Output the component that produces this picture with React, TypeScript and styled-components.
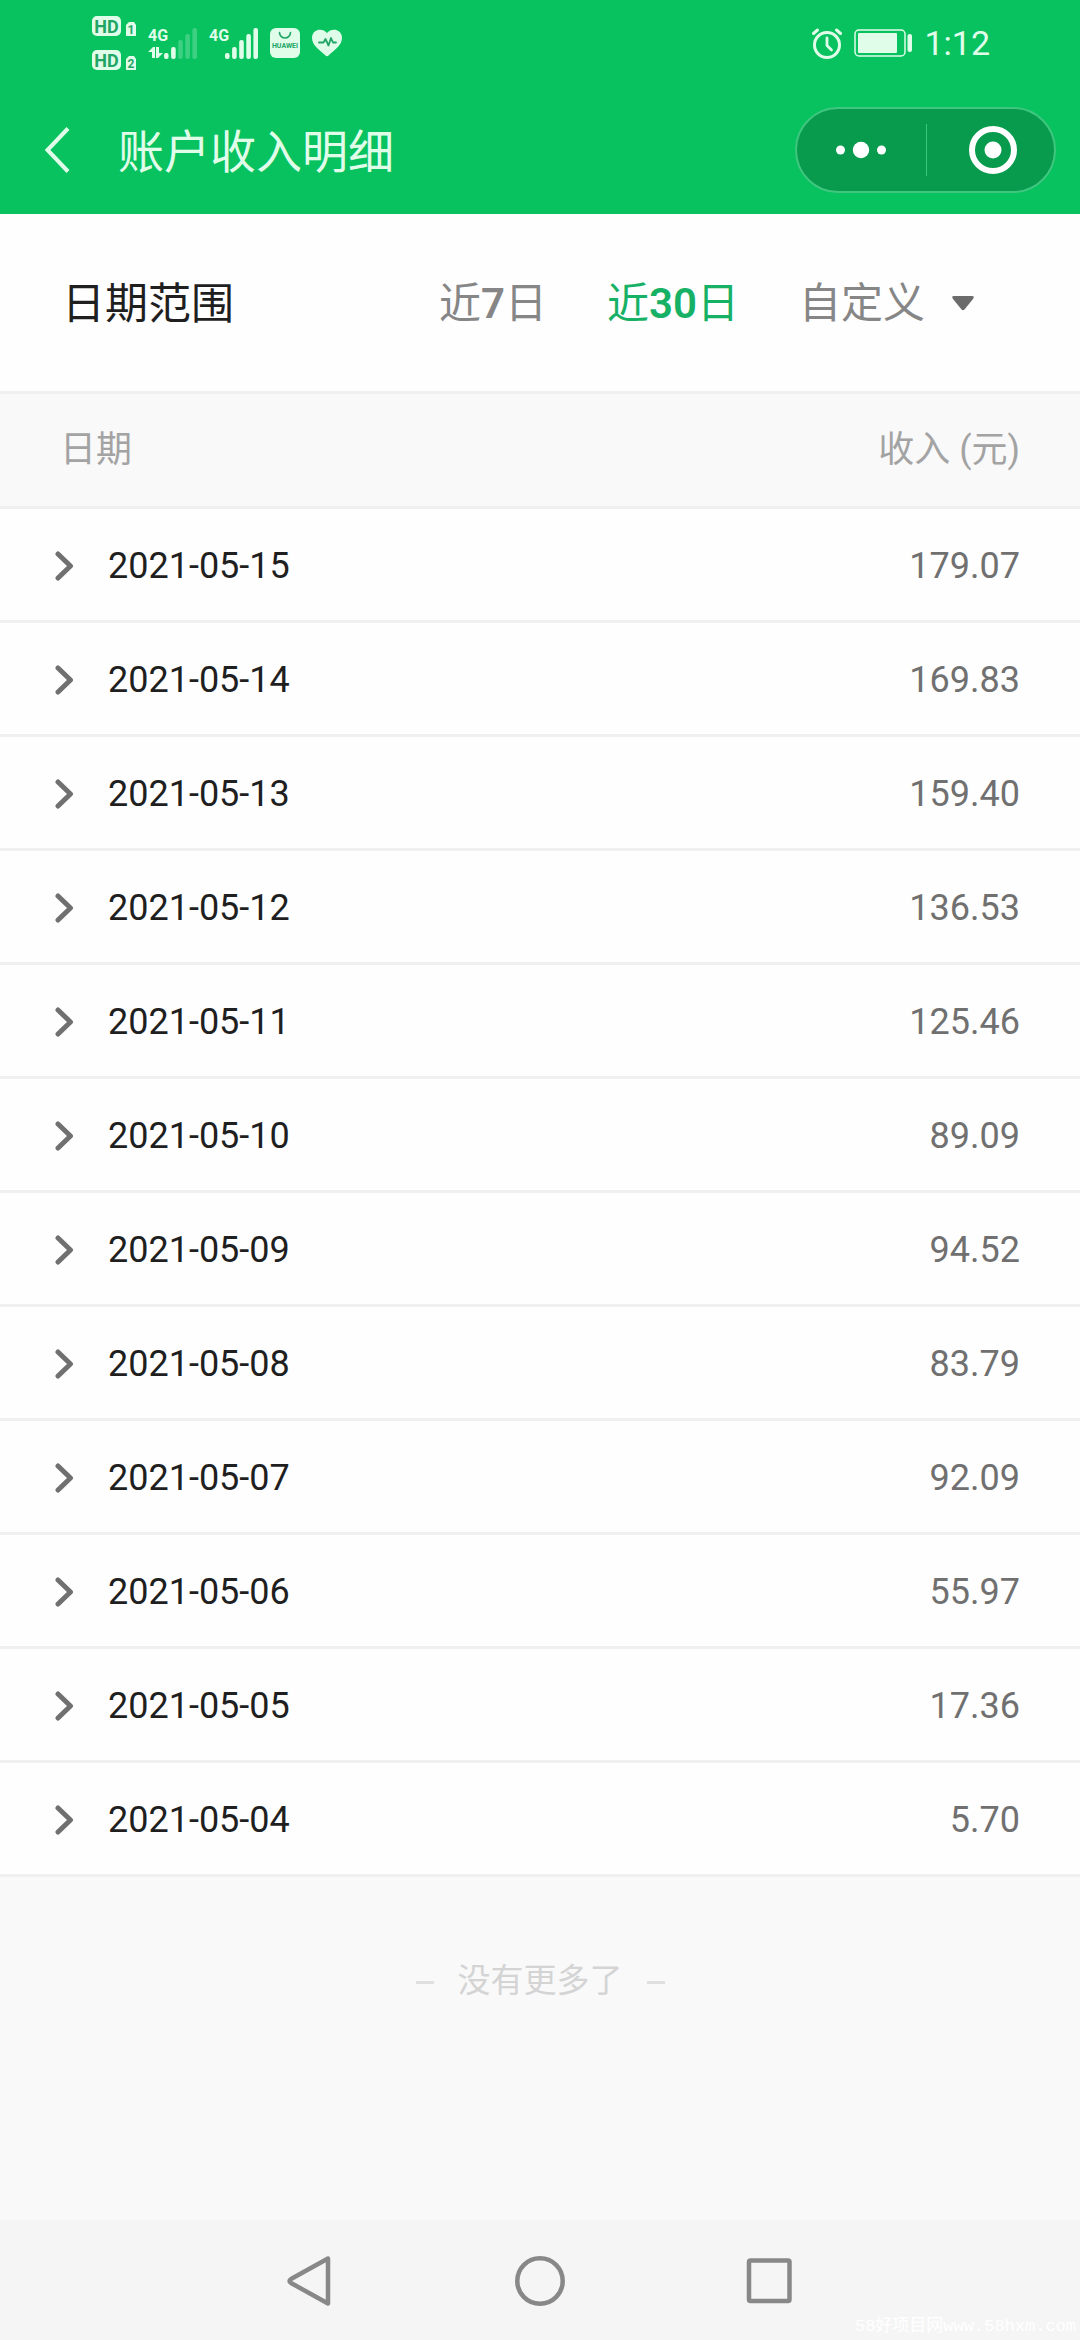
import React, { useState } from "react";
import styled, { createGlobalStyle } from "styled-components";

const color = {
  brand: "#07c25f",
  onBrand: "#e0fdea",
  capsule: "#089b4d",
  capsuleLine: "#3fc67f",
  page: "#f9f9f9",
  surface: "#fefefe",
  line: "#f0f0f0",
  text: "#1f1f1f",
  muted: "#707070",
  soft: "#868686",
  faint: "#a3a3a3",
  ghost: "#d4d4d4",
  active: "#17b165",
  systemBar: "#f5f5f5",
};

const GlobalStyle = createGlobalStyle`
  *, *::before, *::after { box-sizing: border-box; }
  body {
    margin: 0;
    background: ${color.page};
    font-family: Roboto, "Noto Sans CJK SC", sans-serif;
    color: ${color.text};
  }
  button, select { font: inherit; color: inherit; background: none; border: 0; margin: 0; padding: 0; }
  svg { display: block; flex: none; }
`;

const Screen = styled.div`
  display: flex;
  flex-direction: column;
  min-height: 100vh;
`;

const TopArea = styled.header`
  background: ${color.brand};
  color: ${color.onBrand};
`;

const StatusBar = styled.div`
  display: flex;
  align-items: center;
  justify-content: space-between;
  height: 86px;
  padding: 0 90px 0 92px;
`;

const StatusGroup = styled.div`
  display: flex;
  align-items: center;
  gap: 12px;
`;

const Clock = styled.time`
  font-size: 34px;
  line-height: 40px;
`;

const TitleBar = styled.div`
  display: flex;
  align-items: center;
  height: 128px;
  padding: 0 24px 0 42px;
`;

const BackButton = styled.button`
  display: flex;
  width: 76px;
  height: 60px;
  align-items: center;
`;

const Title = styled.h1`
  flex: 1;
  margin: 0;
  padding-top: 3px;
  font-size: 46px;
  font-weight: 400;
  line-height: 60px;
`;

const Capsule = styled.div`
  display: flex;
  width: 261px;
  height: 86px;
  align-items: center;
  border: 2px solid ${color.capsuleLine};
  border-radius: 43px;
  background: ${color.capsule};
  color: #fff;
`;

const CapsuleButton = styled.button`
  display: flex;
  width: 50%;
  height: 52px;
  align-items: center;
  justify-content: center;

  & + & {
    padding-left: 6px;
    border-left: 1px solid ${color.capsuleLine};
  }
`;

const FilterBar = styled.section`
  display: flex;
  align-items: center;
  justify-content: space-between;
  height: 180px;
  padding: 2px 106px 0 62px;
  border-bottom: 3px solid ${color.line};
  background: ${color.surface};
  font-size: 42px;
  line-height: 60px;
`;

const FilterLabel = styled.h2`
  margin: 0;
  font-size: 43px;
  font-weight: 400;
`;

const FilterOptions = styled.div`
  display: flex;
  align-items: center;
  gap: 60px;
`;

const FilterButton = styled.button<{ $active?: boolean }>`
  color: ${(p) => (p.$active ? color.active : color.soft)};

  b {
    font-weight: 600;
  }
`;

const CustomRange = styled.label`
  position: relative;
  display: flex;
  align-items: center;
  color: ${color.soft};

  svg {
    position: absolute;
    right: 0;
    pointer-events: none;
  }
`;

const RangeSelect = styled.select`
  appearance: none;
  padding-right: 48px;
  line-height: 60px;
`;

const IncomeTable = styled.table`
  width: 100%;
  border-collapse: separate;
  border-spacing: 0;
  font-size: 36px;
  line-height: 48px;
`;

const HeadCell = styled.th<{ $end?: boolean }>`
  height: 115px;
  padding: 0 60px;
  border-bottom: 3px solid ${color.line};
  color: ${color.faint};
  font-weight: 400;
  text-align: ${(p) => (p.$end ? "right" : "left")};
`;

const DateCell = styled.td`
  height: 114px;
  padding: 2px 0 0 52px;
  border-bottom: 3px solid ${color.line};
  background: ${color.surface};
`;

const AmountCell = styled(DateCell)`
  padding: 2px 60px 0 0;
  color: ${color.muted};
  text-align: right;
`;

const ExpandButton = styled.button`
  display: flex;
  align-items: center;
  gap: 30px;

  svg {
    color: ${color.muted};
  }
`;

const EndNote = styled.p`
  display: flex;
  flex: 1;
  align-items: flex-start;
  justify-content: center;
  gap: 24px;
  margin: 0;
  padding: 80px 0;
  color: ${color.ghost};
  font-size: 33px;
  line-height: 48px;

  &::before,
  &::after {
    content: "";
    width: 18px;
    height: 3px;
    margin-top: 24px;
    background: #e0e0e0;
  }
`;

const SystemNav = styled.nav`
  position: relative;
  display: flex;
  align-items: center;
  justify-content: center;
  gap: 180px;
  height: 120px;
  padding-top: 2px;
  background: ${color.systemBar};
  color: #888;
`;

const SystemButton = styled.button`
  display: flex;
`;

const Watermark = styled.span`
  position: absolute;
  right: 4px;
  bottom: 2px;
  color: #fff;
  font-family: "Liberation Mono", "Noto Sans CJK SC", monospace;
  font-size: 17px;
  line-height: 22px;
`;

const HdIcon = () => (
  <svg width="44" height="70" viewBox="0 -8 44 70" fontFamily="Roboto, sans-serif" fontWeight="700">
    {["1", "2"].map((n, i) => (
      <g key={n} transform={`translate(0 ${i * 34})`}>
        <rect width="29" height="20" rx="5" fill="currentColor" />
        <text x="14.5" y="16.500" fontSize="18" textAnchor="middle" fill="#21a565">HD</text>
        <path d="M37 6h5l2 3v11H34V9z" fill="currentColor" />
        <text x="39" y="18" fontSize="12" textAnchor="middle" fill="#21a565">{n}</text>
      </g>
    ))}
  </svg>
);

const SignalIcon = ({ level, data }: { level: number; data?: boolean }) => (
  <svg width="49" height="47" viewBox="0 -8 49 47" fill="currentColor">
    <text x="0" y="13" fontSize="16" fontWeight="700" fontFamily="Roboto, sans-serif">4G</text>
    {data && <path d="M0 24l5-5h2v11H4v-6zM8 19h3v6h4l-5 5H8z" />}
    {[6, 12, 19, 25, 31].map((h, i) => (
      <rect key={h} x={16 + i * 7.1} y={31 - h} width="4.6" height={h} rx="2" opacity={i < level ? 1 : 0.25} />
    ))}
  </svg>
);

const StoreIcon = () => (
  <svg width="30" height="30" viewBox="0 0 30 30">
    <rect width="30" height="30" rx="6" fill="currentColor" />
    <path d="M9.500 4.500a5.500 5.500 0 0 0 11 0" fill="none" stroke="#21a565" strokeWidth="1.600" strokeLinecap="round" />
    <text x="15" y="20" fontSize="7" fontWeight="700" fontFamily="Roboto, sans-serif" textAnchor="middle" fill="#21a565">HUAWEI</text>
  </svg>
);

const HealthIcon = () => (
  <svg width="30" height="28" viewBox="0 0 30 28">
    <path d="M15 4C11-1.500 0-.5 0 9c0 8 9 13 13.500 17.500q1.500 1.500 3 0C21 22 30 17 30 9 30-.5 19-1.500 15 4z" fill="currentColor" />
    <path d="M7 13.500h4.500l2-3.500 3 6.500L19 9l2 4.500h3" fill="none" stroke="#21a565" strokeWidth="1.800" strokeLinejoin="round" strokeLinecap="round" />
  </svg>
);

const AlarmIcon = () => (
  <svg width="30" height="31" viewBox="0 0 30 31" fill="none" stroke="currentColor" strokeLinecap="round">
    <circle cx="15" cy="17" r="12.500" strokeWidth="3" />
    <path d="M15 10v7.500l4.500 4.500" strokeWidth="2.800" strokeLinejoin="round" />
    <path d="M1.500 5.500l4-3.500M28.500 5.500l-4-3.500" strokeWidth="3" />
  </svg>
);

const BatteryIcon = () => (
  <svg width="58" height="28" viewBox="0 0 58 28">
    <rect x="1" y="1" width="50" height="26" rx="4" fill="none" stroke="currentColor" strokeWidth="1.500" />
    <rect x="4" y="4" width="39" height="20" rx="1" fill="currentColor" />
    <rect x="53.500" y="5" width="4.500" height="18" rx="2" fill="currentColor" />
  </svg>
);

const rows: [string, string][] = [
  ["2021-05-15", "179.07"],
  ["2021-05-14", "169.83"],
  ["2021-05-13", "159.40"],
  ["2021-05-12", "136.53"],
  ["2021-05-11", "125.46"],
  ["2021-05-10", "89.09"],
  ["2021-05-09", "94.52"],
  ["2021-05-08", "83.79"],
  ["2021-05-07", "92.09"],
  ["2021-05-06", "55.97"],
  ["2021-05-05", "17.36"],
  ["2021-05-04", "5.70"],
];

export default function App() {
  const [days, setDays] = useState(30);

  return (
    <Screen>
      <GlobalStyle />
      <TopArea>
        <StatusBar>
          <StatusGroup>
            <HdIcon />
            <SignalIcon level={2} data />
            <SignalIcon level={5} />
            <StoreIcon />
            <HealthIcon />
          </StatusGroup>
          <StatusGroup>
            <AlarmIcon />
            <BatteryIcon />
            <Clock>1:12</Clock>
          </StatusGroup>
        </StatusBar>
        <TitleBar>
          <BackButton aria-label="返回">
            <svg width="30" height="48" viewBox="0 0 30 48" fill="none" stroke="currentColor" strokeWidth="4">
              <path d="M26 2.500L5.500 24 26 45.500" />
            </svg>
          </BackButton>
          <Title>账户收入明细</Title>
          <Capsule>
            <CapsuleButton aria-label="更多">
              <svg width="50" height="18" viewBox="0 0 50 18" fill="currentColor">
                <circle cx="4.500" cy="9" r="4.500" />
                <circle cx="25" cy="9" r="8.200" />
                <circle cx="45.500" cy="9" r="4.500" />
              </svg>
            </CapsuleButton>
            <CapsuleButton aria-label="关闭">
              <svg width="48" height="48" viewBox="0 0 48 48">
                <circle cx="24" cy="24" r="21" fill="none" stroke="currentColor" strokeWidth="6" />
                <circle cx="24" cy="24" r="8.500" fill="currentColor" />
              </svg>
            </CapsuleButton>
          </Capsule>
        </TitleBar>
      </TopArea>

      <FilterBar>
        <FilterLabel>日期范围</FilterLabel>
        <FilterOptions>
          {[7, 30].map((n) => (
            <FilterButton key={n} $active={days === n} aria-pressed={days === n} onClick={() => setDays(n)}>
              近<b>{n}</b>日
            </FilterButton>
          ))}
          <CustomRange>
            <RangeSelect aria-label="自定义">
              <option>自定义</option>
            </RangeSelect>
            <svg width="22" height="15" viewBox="0 0 22 15" fill="#6b6b6b">
              <path d="M2 0h18q3 0 1 3l-8.500 10.500q-1.500 1.500-3 0L1 3q-2-3 1-3z" />
            </svg>
          </CustomRange>
        </FilterOptions>
      </FilterBar>

      <IncomeTable>
        <thead>
          <tr>
            <HeadCell scope="col">日期</HeadCell>
            <HeadCell scope="col" $end>收入 (元)</HeadCell>
          </tr>
        </thead>
        <tbody>
          {rows.map(([date, amount]) => (
            <tr key={date}>
              <DateCell>
                <ExpandButton aria-expanded={false}>
                  <svg width="26" height="30" viewBox="0 0 26 30" fill="none" stroke="currentColor" strokeWidth="5" strokeLinecap="round" strokeLinejoin="round">
                    <path d="M6 3l12.500 12L6 27" />
                  </svg>
                  {date}
                </ExpandButton>
              </DateCell>
              <AmountCell>{amount}</AmountCell>
            </tr>
          ))}
        </tbody>
      </IncomeTable>

      <EndNote>没有更多了</EndNote>

      <SystemNav>
        <SystemButton aria-label="返回">
          <svg width="50" height="52" viewBox="0 0 50 52" fill="none" stroke="currentColor" strokeWidth="4.500" strokeLinejoin="round">
            <path d="M43 3.500v45L6 28q-3-2 0-4z" />
          </svg>
        </SystemButton>
        <SystemButton aria-label="主页">
          <svg width="50" height="50" viewBox="0 0 50 50" fill="none" stroke="currentColor" strokeWidth="4.500">
            <circle cx="25" cy="25" r="22.700" />
          </svg>
        </SystemButton>
        <SystemButton aria-label="最近任务">
          <svg width="50" height="50" viewBox="0 0 50 50" fill="none" stroke="currentColor" strokeWidth="4.500">
            <rect x="4" y="4.500" width="40.500" height="40.500" rx="1.500" />
          </svg>
        </SystemButton>
        <Watermark>58好项目网www.58hxm.com</Watermark>
      </SystemNav>
    </Screen>
  );
}
